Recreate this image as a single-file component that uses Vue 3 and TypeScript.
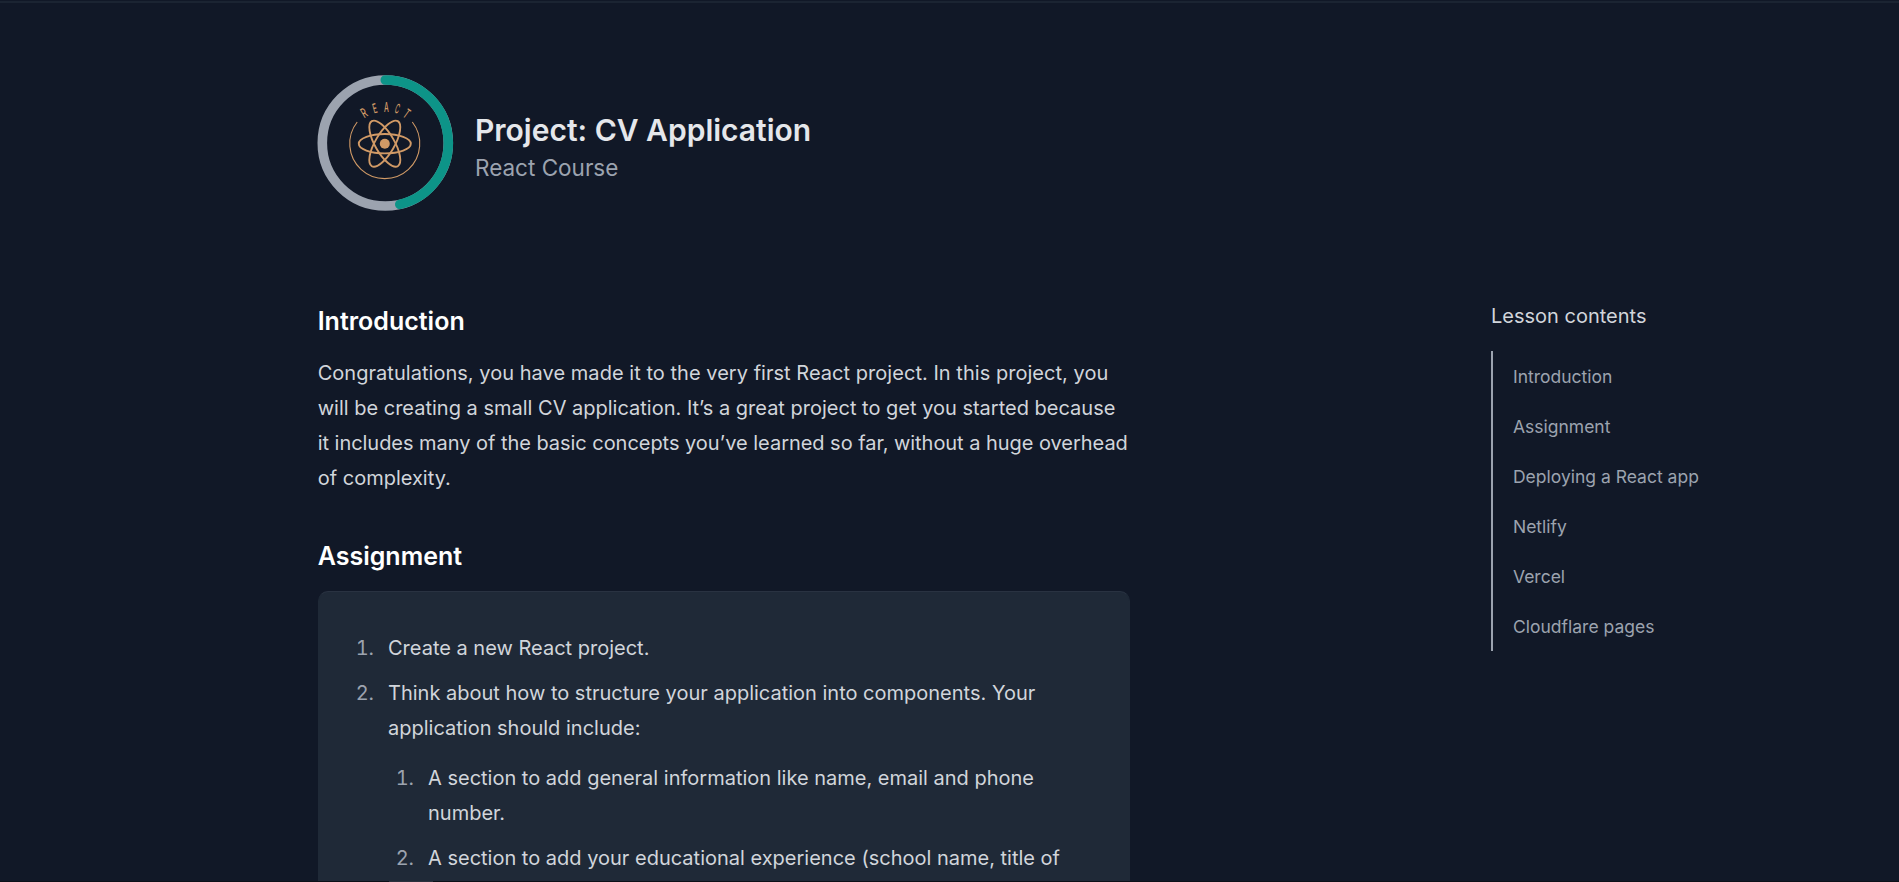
<script setup lang="ts">
const contents: string[] = ['Introduction', 'Assignment', 'Deploying a React app', 'Netlify', 'Vercel', 'Cloudflare pages']
</script>

<template>
  <div class="page">
    <header class="lesson-header">
      <svg class="badge" viewBox="0 0 136 136" aria-label="React course progress">
        <circle cx="67.3" cy="68" r="63" fill="none" stroke="#9ca3af" stroke-width="9.6" />
        <path d="M67.3 5A63 63 0 0 1 81.8 129.3" fill="none" stroke="#0d9488" stroke-width="9.6" stroke-linecap="round" />
        <g fill="none" stroke="#d19a66">
          <path d="M94.3 47A35 35 0 1 1 39.2 47" stroke-width="1.1" />
          <g stroke-width="1.9">
            <ellipse cx="66.8" cy="68.7" rx="26" ry="9.7" />
            <ellipse cx="66.8" cy="68.7" rx="26" ry="9.7" transform="rotate(60 66.8 68.7)" />
            <ellipse cx="66.8" cy="68.7" rx="26" ry="9.7" transform="rotate(120 66.8 68.7)" />
          </g>
          <circle cx="66.8" cy="68.7" r="5" fill="#d19a66" stroke="none" />
        </g>
        <g class="badge-text">
          <text transform="translate(48.5 42) rotate(-31) scale(.58 1)">R</text>
          <text transform="translate(58 38) rotate(-15) scale(.52 1)">E</text>
          <text transform="translate(68.5 36.7) scale(.5 1)">A</text>
          <text transform="translate(78 38.2) rotate(18) scale(.42 1)">C</text>
          <text transform="translate(86 42.5) rotate(36) scale(.55 1)">T</text>
        </g>
      </svg>
      <div class="titles">
        <h1>Project: CV Application</h1>
        <p>React Course</p>
      </div>
    </header>
    <div class="columns">
      <main class="lesson">
        <h3>Introduction</h3>
        <p class="intro"><span class="loose">Congratulations, you have made it to the very first React project. In this project, you</span><br>will be creating a small CV application. It’s a great project to get you started because<br><span class="tight">it includes many of the basic concepts you’ve learned so far, without a huge overhead</span><br>of complexity.</p>
        <h3>Assignment</h3>
        <section class="card">
          <ol>
            <li>Create a new React project.</li>
            <li><span>Think about how to structure your application into components. Your application should include:</span>
              <ol>
                <li>A section to add general information like name, email and phone number.</li>
                <li>A section to add your educational experience (school name, title of</li>
              </ol>
            </li>
          </ol>
        </section>
      </main>
      <nav class="toc">
        <h4>Lesson contents</h4>
        <ul>
          <li v-for="item in contents" :key="item">{{ item }}</li>
        </ul>
      </nav>
    </div>
    <div class="bottom-edge"><div class="edge-segment"></div></div>
  </div>
</template>

<style>
html, body { background: #111827; overflow: hidden; }
</style>

<style scoped>
.page {
  position: relative;
  box-sizing: border-box;
  height: 882px;
  overflow: hidden;
  background: #111827;
  border-top: 1px solid #111827;
  box-shadow: inset 0 2px 0 #1b2432;
  padding: 73px 0 0 317.7px;
  font-family: Inter, "Liberation Sans", sans-serif;
  font-size: 20px;
  line-height: 35px;
  color: #d1d5db;
}
h1, h3, h4, p, ol, ul { margin: 0; padding: 0; }
.lesson-header { display: flex; align-items: center; gap: 21.3px; height: 137px; }
.badge { width: 136px; height: 136px; flex: none; overflow: visible; }
.badge-text { fill: #d19a66; font: 500 13.5px Inter, sans-serif; text-anchor: middle; }
.titles { padding-top: 10px; }
h1 { font-size: 30px; line-height: 40px; font-weight: 600; color: #e5e7eb; }
.titles p { font-size: 22.5px; line-height: 35px; color: #9ca3af; }
.columns { display: flex; justify-content: space-between; width: 1399.3px; padding-top: 90px; }
.lesson { width: 812.3px; }
h3 { font-size: 25px; line-height: 40px; font-weight: 600; color: #fff; }
.intro { margin: 15px 0 40px; white-space: nowrap; }
.loose { letter-spacing: .035px; }
.tight { letter-spacing: -.04px; }
.card {
  box-sizing: border-box;
  margin-top: 15px;
  padding: 39px 39.3px;
  height: 600px;
  background: #1f2937;
  border: 1px solid #1f2937;
  border-top-color: #293241;
  border-radius: 10px;
}
ol { list-style: none; counter-reset: step; padding-left: 30px; }
ol li { counter-increment: step; margin-bottom: 10px; }
ol li::before {
  content: counter(step) ".";
  display: inline-block;
  width: 30px;
  margin-left: -44px;
  padding-right: 14px;
  text-align: right;
  font-variant-numeric: tabular-nums;
  color: #9ca3af;
}
ol ol { margin-top: 15px; padding-left: 40px; }
.toc { width: 226px; }
h4 { font-size: 20px; line-height: 30px; font-weight: 400; }
.toc ul {
  list-style: none;
  margin-top: 20px;
  border-left: 2px solid #9ca3af;
  padding-left: 20px;
  font-size: 17.5px;
  color: #9ca3af;
}
.toc li { box-sizing: border-box; height: 50px; padding-top: 1px; line-height: 50px; }
.bottom-edge { position: absolute; left: 0; right: 0; bottom: 0; height: 1px; background: #0c1018; }
.edge-segment { width: 44px; height: 1px; margin-left: 389px; background: #2b303c; }
</style>
